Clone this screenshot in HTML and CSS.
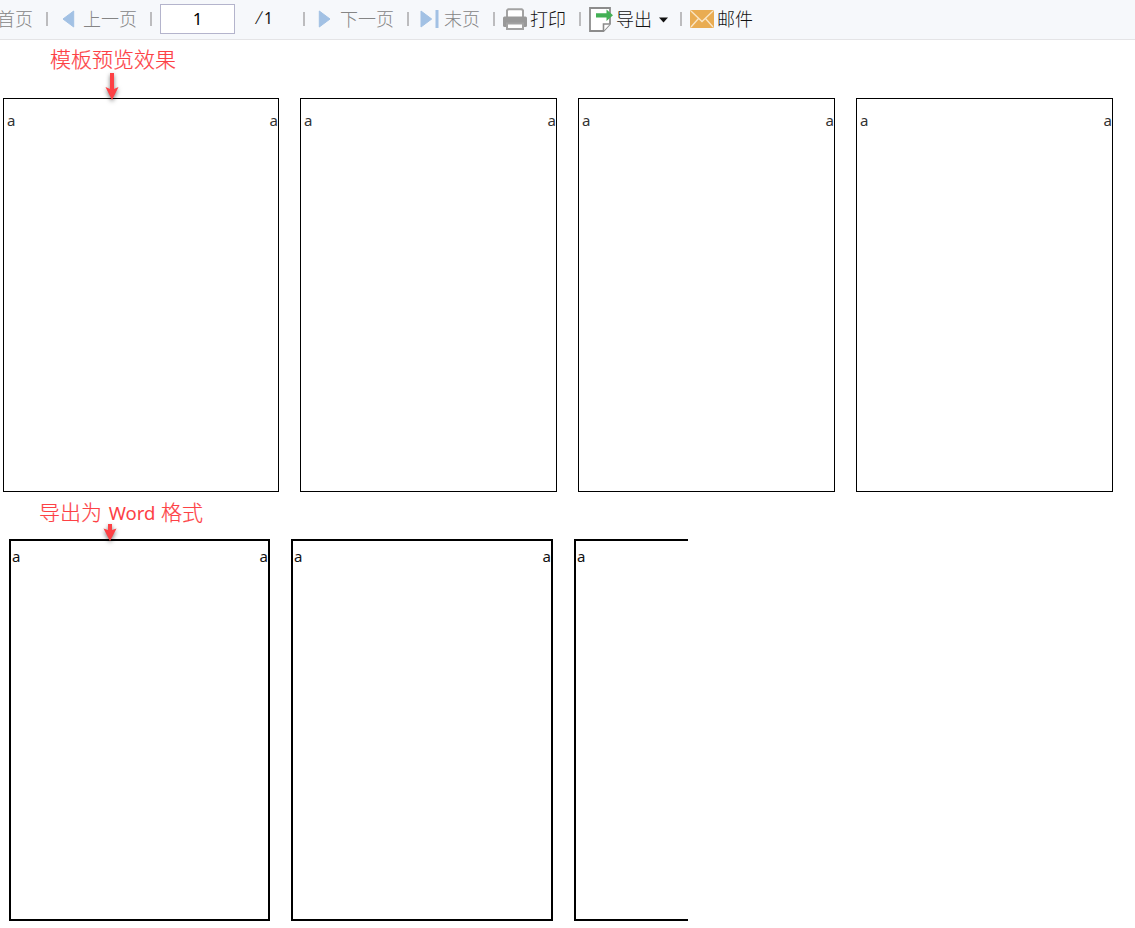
FILE: index.html
```
<!DOCTYPE html>
<html lang="zh-CN">
<head>
<meta charset="utf-8">
<title>报表预览</title>
<link rel="stylesheet" href="styles.css">
</head>
<body>
<header class="toolbar">
  <span class="item first disabled"><span class="label">首页</span></span>
  <i class="sep"></i>
  <span class="item prev disabled"><svg class="icon" width="13" height="18" viewBox="0 0 13 18"><path d="M11.7 1v16L1 9z" fill="#a2c1e4" stroke="#a2c1e4" stroke-linejoin="round"/></svg><span class="label">上一页</span></span>
  <i class="sep"></i>
  <input class="page-input" value="1">
  <span class="total"><span class="slash">/</span>1</span>
  <i class="sep"></i>
  <span class="item next disabled"><svg class="icon" width="13" height="18" viewBox="0 0 13 18"><path d="M1.3 1v16L12 9z" fill="#a2c1e4" stroke="#a2c1e4" stroke-linejoin="round"/></svg><span class="label">下一页</span></span>
  <i class="sep"></i>
  <span class="item last disabled"><svg class="icon" width="19" height="18" viewBox="0 0 19 18"><path d="M1 1v16l10.700-8z" fill="#a2c1e4" stroke="#a2c1e4" stroke-linejoin="round"/><path d="M15.500 0h3v18h-3z" fill="#a2c1e4"/></svg><span class="label">末页</span></span>
  <i class="sep"></i>
  <span class="item tool"><svg class="icon" width="24" height="24" viewBox="0 0 24 24"><path d="M4 11V3.500L5.200 2.300h13.600L20 3.500V11" fill="#fff" stroke="#a3a3a3" stroke-width="2"/><rect y="9.500" width="24" height="10.500" rx="1.500" fill="#999"/><path d="M4 16.500h16v5.500H4z" fill="#fff" stroke="#a3a3a3" stroke-width="2"/></svg><span class="label">打印</span></span>
  <i class="sep"></i>
  <span class="item tool export"><svg class="icon" width="24" height="26" viewBox="0 0 24 26"><path d="M1 2h20v16l-6.500 7H1z" fill="#fff" stroke="#8c8c8c" stroke-width="1.800"/><path d="M14.500 25v-7H21" fill="#fff" stroke="#8c8c8c" stroke-width="1.600"/><path d="M7 7.200h10.500V3.600L24 9.300l-6.500 5.700v-3.600H7z" fill="#43b055"/></svg><span class="label">导出</span><svg class="caret" width="9" height="6" viewBox="0 0 9 6"><path d="M0 .5h9L4.500 5.500z" fill="#111"/></svg></span>
  <i class="sep"></i>
  <span class="item tool"><svg class="icon" width="24" height="18" viewBox="0 0 24 18"><rect width="24" height="18" rx="1.500" fill="#e9ac52"/><path d="M1 1l11 10.500L23 1M1 17l7.500-8.500M23 17l-7.500-8.500" fill="none" stroke="#fae6c6" stroke-width="1.300"/></svg><span class="label">邮件</span></span>
</header>
<main>
  <h2 class="caption preview-caption">模板预览效果
    <svg class="arrow" width="24" height="36" viewBox="0 0 24 36"><path d="M10 3h4v16l4.500-2L12 30 5.500 17l4.500 2z" fill="#fd4145"/></svg>
  </h2>
  <section class="pages preview">
    <div class="page"><span>a</span><span>a</span></div>
    <div class="page"><span>a</span><span>a</span></div>
    <div class="page"><span>a</span><span>a</span></div>
    <div class="page"><span>a</span><span>a</span></div>
  </section>
  <h2 class="caption word-caption">导出为 <span class="latin">Word</span> 格式
    <svg class="arrow" width="24" height="26" viewBox="0 0 24 26"><path d="M10 3h4v6l4.500-1.500L12 20 5.500 7.500 10 9z" fill="#fd4145"/></svg>
  </h2>
  <section class="pages word">
    <div class="page"><span>a</span><span>a</span></div>
    <div class="page"><span>a</span><span>a</span></div>
    <div class="page cut"><span>a</span></div>
  </section>
</main>
</body>
</html>
```
FILE: styles.css
```
* { box-sizing: border-box; }
body {
  margin: 0;
  height: 928px;
  overflow: hidden;
  background: #fff;
  font-family: "Noto Sans", "Noto Sans CJK SC", sans-serif;
}
.toolbar {
  display: flex;
  align-items: center;
  height: 40px;
  padding-bottom: 2px;
  background: #f6f8fb;
  border-bottom: 1px solid #e4e4e6;
  font: 300 18px/26px "Noto Sans CJK SC", sans-serif;
  color: #111;
  white-space: nowrap;
}
.item { display: flex; align-items: center; flex: none; }
.label { padding-bottom: 2px; }
.disabled { color: #858585; }
.icon, .caret { display: block; flex: none; }
.sep { flex: none; width: 2px; height: 14px; background: #bcbcbe; }
.first { width: 49px; margin-left: -3px; }
.prev { width: 102px; padding-left: 14px; gap: 8px; }
.page-input {
  width: 75px;
  height: 30px;
  margin-left: 8px;
  padding: 0;
  border: 1px solid #b4b4cc;
  background: #fff;
  color: #000;
  text-align: center;
  font: 17px "Noto Sans", sans-serif;
}
.total { width: 68px; padding: 0 0 2px 21px; font: 15.500px/26px "Noto Sans", sans-serif; color: #111; }
.slash { display: inline-block; width: 8px; font-size: 18px; font-weight: 300; transform: skewX(-10deg); }
.next { width: 102px; padding-left: 13px; gap: 9px; }
.last { width: 84px; padding-left: 11px; gap: 5px; }
.tool { padding-left: 8px; padding-right: 13px; gap: 3px; }
.export { padding-right: 12px; }
.caret { margin-left: 4px; margin-top: 2px; }
.caption {
  position: relative;
  margin: 0;
  font: 300 21px/30px "Noto Sans CJK SC", sans-serif;
  color: #fd4145;
  -webkit-text-stroke: .2px #fd4145;
}
.latin { margin: 0 1px 0 2px; font-family: "Noto Sans", sans-serif; font-size: 18.500px; font-weight: 400; -webkit-text-stroke: 0; }
.preview-caption { height: 58px; padding: 3px 0 0 50px; }
.word-caption { height: 47px; padding: 4px 0 0 39px; }
.arrow { position: absolute; z-index: 1; left: 100px; filter: drop-shadow(0 2px 2px rgba(0,0,0,.5)); }
.preview-caption .arrow { top: 30px; }
.word-caption .arrow { top: 29px; left: 98px; }
.pages { display: grid; column-gap: 21px; }
.preview { grid-template-columns: 276px 257px 257px 257px; height: 394px; padding-left: 3px; }
.word { grid-template-columns: 261px 262px 114px; height: 382px; padding-left: 9px; }
.page {
  display: flex;
  justify-content: space-between;
  border: 1px solid #000;
  padding: 11px 0 0 3px;
  font: 15px/20px "Noto Sans", sans-serif;
  color: #333;
}
.word .page { border-width: 2px; padding: 5px 0 0 1px; color: #111; }
.word .cut { border-right: 0; }
```
